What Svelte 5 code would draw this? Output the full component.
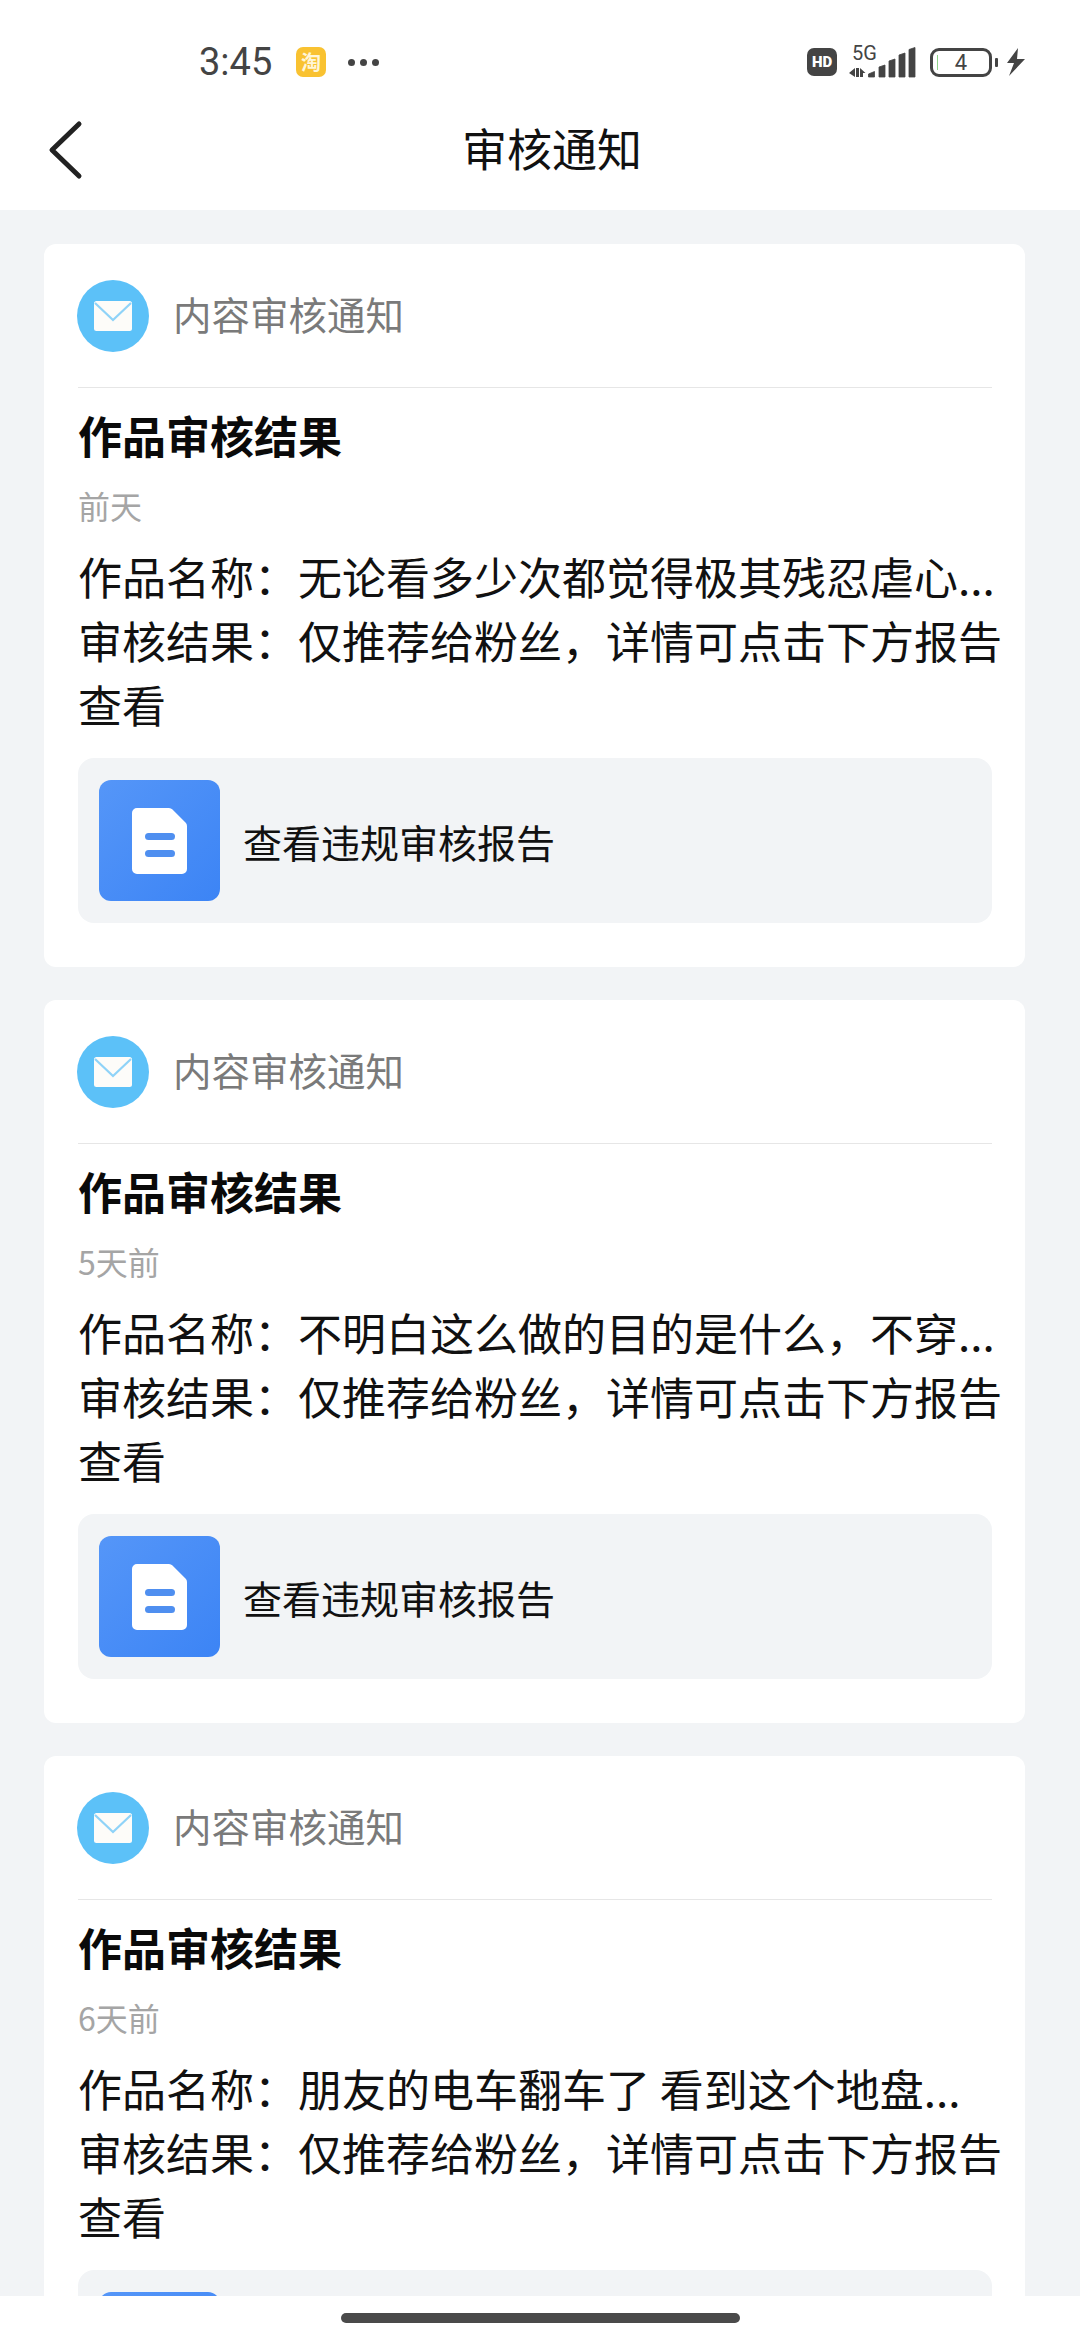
<script lang="ts">
  interface Notice { date: string; name: string }

  const notices: Notice[] = [
    { date: '前天', name: '无论看多少次都觉得极其残忍虐心...' },
    { date: '5天前', name: '不明白这么做的目的是什么，不穿...' },
    { date: '6天前', name: '朋友的电车翻车了 看到这个地盘...' },
  ];
</script>

<div class="phone">
  <div class="status">
    <div class="status-left">
      <span class="time">3:45</span>
      <span class="tao">淘</span>
      <span class="dots"><i></i><i></i><i></i></span>
    </div>
    <div class="status-right">
      <span class="hd">HD</span>
      <div class="signal">
        <span class="five-g">5G</span>
        <svg width="67" height="31" viewBox="0 0 67 31">
          <path d="M0 26l6-5v9zM7 21h3v9H7zM11 21l5.500 5H14v4h-3z" fill="#444" />
          <path d="M19.500 30v-3l6-2.500V30zM30 30V20l6-2v12zM40 30V14l6-2v18zM50 30V8l6-2v24zM60 30V2.500l6-2V30z" fill="#444" stroke="#444" stroke-width="0.8" stroke-linejoin="round" />
        </svg>
      </div>
      <div class="battery"><span class="level"></span><span class="num">4</span></div>
      <span class="nub"></span>
      <svg class="bolt" width="20" height="28" viewBox="0 0 20 28">
        <path d="M12 0L1 15h7L3 28l16-17h-8z" fill="#444" />
      </svg>
    </div>
  </div>

  <div class="nav">
    <svg class="back" width="36" height="60" viewBox="0 0 36 60">
      <path d="M32 4L5 30l27 26" fill="none" stroke="#222" stroke-width="5" stroke-linecap="round" stroke-linejoin="round" />
    </svg>
    <span class="nav-title">审核通知</span>
  </div>

  <div class="list">
    {#each notices as n}
      <div class="card">
        <div class="card-head">
          <span class="mail">
            <svg width="38" height="30" viewBox="0 0 38 30">
              <rect width="38" height="30" rx="2.500" fill="#fdfcf9" />
              <path d="M1 2l18 17L37 2" fill="none" stroke="#8fd3f8" stroke-width="2.200" />
            </svg>
          </span>
          <span class="card-label">内容审核通知</span>
        </div>
        <div class="card-title">作品审核结果</div>
        <div class="card-date">{n.date}</div>
        <div class="card-body">
          <div class="one-line">作品名称：{n.name}</div>
          <div>审核结果：仅推荐给粉丝，详情可点击下方报告查看</div>
        </div>
        <div class="report">
          <span class="doc">
            <svg width="55" height="66" viewBox="0 0 55 66">
              <path d="M5 0h32a5 5 0 0 1 3.500 1.500l13 13a5 5 0 0 1 1.500 3.500V61a5 5 0 0 1-5 5H5a5 5 0 0 1-5-5V5a5 5 0 0 1 5-5z" fill="#fff" />
              <rect x="13" y="25" width="30" height="7" rx="3.500" fill="#4f8ff0" />
              <rect x="13" y="42" width="30" height="7" rx="3.500" fill="#4f8ff0" />
            </svg>
          </span>
          <span class="report-text">查看违规审核报告</span>
        </div>
      </div>
    {/each}
  </div>

  <div class="home-bar"><span></span></div>
</div>

<style>
  :global(body) {
    margin: 0;
    background: #fff;
  }
  .phone {
    width: 1080px;
    height: 2340px;
    display: flex;
    flex-direction: column;
    overflow: hidden;
    background: #f2f4f6;
    font-family: "Noto Sans CJK SC", "Noto Sans", sans-serif;
  }
  .status {
    height: 84px;
    flex: none;
    display: flex;
    align-items: center;
    justify-content: space-between;
    background: #fff;
    padding: 40px 54px 0 199px;
    box-sizing: border-box;
  }
  .status-left {
    display: flex;
    align-items: center;
  }
  .time {
    width: 97px;
    font-family: Roboto, sans-serif;
    font-size: 38px;
    color: #444;
  }
  .tao {
    width: 30px;
    height: 30px;
    border-radius: 7px;
    background: #f9c231;
    color: #fff6d8;
    font-size: 20px;
    font-weight: 700;
    line-height: 30px;
    text-align: center;
  }
  .dots {
    display: flex;
    gap: 5px;
    margin-left: 22px;
  }
  .dots i {
    width: 7px;
    height: 7px;
    border-radius: 50%;
    background: #444;
  }
  .status-right {
    display: flex;
    align-items: center;
  }
  .hd {
    width: 30px;
    height: 28px;
    border-radius: 7px;
    background: #444;
    color: #fff;
    font-family: Roboto, sans-serif;
    font-size: 15px;
    font-weight: 900;
    line-height: 28px;
    text-align: center;
  }
  .signal {
    position: relative;
    width: 67px;
    height: 31px;
    margin: 0 14px 0 12px;
  }
  .five-g {
    position: absolute;
    left: 3px;
    top: -5px;
    font-family: Roboto, sans-serif;
    font-size: 20px;
    line-height: 22px;
    color: #444;
  }
  .battery {
    position: relative;
    width: 62px;
    height: 29px;
    box-sizing: border-box;
    border: 3px solid #444;
    border-radius: 9px;
    display: flex;
    align-items: center;
    justify-content: center;
  }
  .level {
    position: absolute;
    left: 4px;
    top: 4px;
    bottom: 4px;
    width: 1px;
    background: #8fd48a;
  }
  .num {
    font-family: Roboto, sans-serif;
    font-size: 22px;
    color: #444;
  }
  .nub {
    width: 3px;
    height: 9px;
    margin: 0 8px 0 3px;
    border-radius: 1px;
    background: #444;
  }
  .nav {
    height: 126px;
    flex: none;
    position: relative;
    display: flex;
    align-items: center;
    justify-content: center;
    background: #fff;
  }
  .back {
    position: absolute;
    left: 47px;
    top: 36px;
  }
  .nav-title {
    font-size: 45px;
    color: #111;
    margin-left: 24px;
  }
  .list {
    flex: 1;
    min-height: 0;
    overflow: hidden;
    padding: 34px 55px 0 44px;
    display: flex;
    flex-direction: column;
    gap: 33px;
  }
  .card {
    flex: none;
    background: #fff;
    border-radius: 12px;
    padding: 36px 33px 44px 34px;
  }
  .card-head {
    display: flex;
    align-items: center;
    gap: 24px;
    padding-bottom: 35px;
    border-bottom: 1px solid #e6e6e6;
  }
  .mail {
    width: 72px;
    height: 72px;
    margin-left: -1px;
    border-radius: 50%;
    background: #5cc1f8;
    display: flex;
    align-items: center;
    justify-content: center;
  }
  .card-label {
    font-size: 38.5px;
    line-height: 64px;
    margin-bottom: 6px;
    color: #7a7a7a;
  }
  .card-title {
    margin-top: 13px;
    font-size: 44px;
    font-weight: 700;
    line-height: 68px;
    color: #0a0a0a;
  }
  .card-date {
    margin-top: 14px;
    font-size: 32px;
    line-height: 44px;
    color: #a5a5a5;
  }
  .card-body {
    margin-top: 17px;
    margin-right: -12px;
    font-size: 44px;
    line-height: 64px;
    color: #111;
  }
  .one-line {
    white-space: nowrap;
  }
  .report {
    margin-top: 22px;
    height: 165px;
    display: flex;
    align-items: center;
    gap: 23px;
    padding-left: 21px;
    border-radius: 16px;
    background: #f2f4f6;
  }
  .doc {
    width: 121px;
    height: 121px;
    border-radius: 12px;
    background: linear-gradient(135deg, #5596f8, #3c84f5);
    display: flex;
    align-items: center;
    justify-content: center;
  }
  .report-text {
    font-size: 39px;
    color: #111;
  }
  .home-bar {
    height: 44px;
    flex: none;
    background: #fff;
    display: flex;
    justify-content: center;
    padding-top: 17px;
    box-sizing: border-box;
  }
  .home-bar span {
    width: 399px;
    height: 10px;
    border-radius: 5px;
    background: #4a4a4a;
  }
</style>
